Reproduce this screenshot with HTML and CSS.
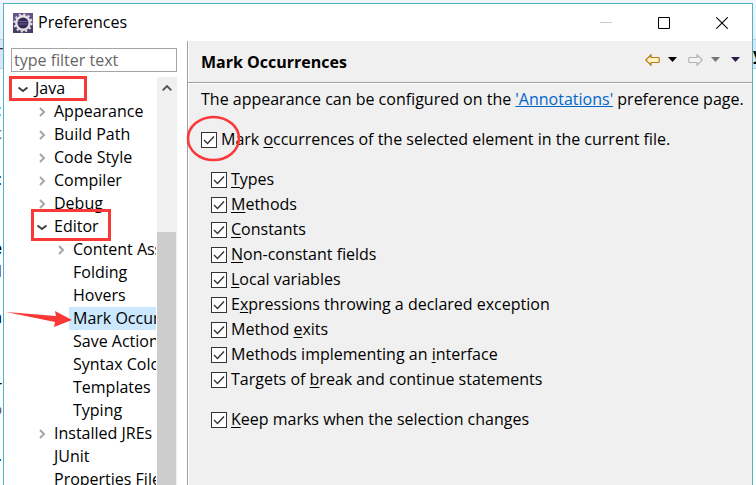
FILE: index.html
```html
<!DOCTYPE html>
<html lang="en">
<head>
<meta charset="utf-8">
<title>Preferences</title>
<link rel="stylesheet" href="styles.css">
</head>
<body>
<div class="desktop">
  <div class="backdrop" aria-hidden="true">
    <div class="strip"><span class="edge-left">T</span><span class="edge-right">y</span></div>
    <div class="code">
      <span></span><span class="teal">:</span><span class="brown">c</span><span></span><span>:</span><span></span><span></span>
      <span class="bold">e</span><span class="brown">l</span><span></span><span class="bold">n</span><span></span><span></span>
      <span>r</span><span class="brown">o</span><span></span><span>.</span>
    </div>
  </div>
  <main class="dialog">
    <header class="titlebar">
      <svg class="app-icon" viewBox="0 0 20 20" aria-hidden="true">
        <rect width="20" height="20" fill="#66548a"/>
        <rect y="10" width="20" height="10" fill="#4a3a68"/>
        <circle cx="10" cy="10" r="8.500" fill="none" stroke="#dcd9e2" stroke-width="2.200" stroke-dasharray="2.225 2.225"/>
        <circle cx="10" cy="10" r="6.700" fill="#352a55" stroke="#e4e2e6" stroke-width="2.400"/>
        <path d="M5.500 8.500h9M5.500 11h9" stroke="#6e6092"/>
      </svg>
      <h1 class="title">Preferences</h1>
      <div class="window-buttons">
        <button class="win-btn" aria-label="Minimize" disabled><svg viewBox="0 0 12 12"><path d="M0 5.500h12" stroke="#ccc"/></svg></button>
        <button class="win-btn" aria-label="Maximize"><svg viewBox="0 0 12 12"><path d="M.5.5h11v11H.5z" fill="none" stroke="#000"/></svg></button>
        <button class="win-btn" aria-label="Close"><svg viewBox="0 0 12 12"><path d="M.3.300l11.400 11.400M11.700.3L.3 11.700" stroke="#000" stroke-width="1.100"/></svg></button>
      </div>
    </header>
    <div class="content">
      <nav class="sidebar">
        <input class="filter" type="text" placeholder="type filter text" aria-label="Filter">
        <div class="tree-wrap">
          <ul class="tree">
            <li class="row"><svg class="arrow open" viewBox="0 0 12 12"><path d="M1.500 4.500L6 8l4.500-3.500"/></svg><span class="label">Java</span></li>
            <li class="row l1"><svg class="arrow" viewBox="0 0 12 12"><path d="M4 2l4 4-4 4"/></svg><span class="label">Appearance</span></li>
            <li class="row l1"><svg class="arrow" viewBox="0 0 12 12"><path d="M4 2l4 4-4 4"/></svg><span class="label">Build Path</span></li>
            <li class="row l1"><svg class="arrow" viewBox="0 0 12 12"><path d="M4 2l4 4-4 4"/></svg><span class="label">Code Style</span></li>
            <li class="row l1"><svg class="arrow" viewBox="0 0 12 12"><path d="M4 2l4 4-4 4"/></svg><span class="label">Compiler</span></li>
            <li class="row l1"><svg class="arrow" viewBox="0 0 12 12"><path d="M4 2l4 4-4 4"/></svg><span class="label">Debug</span></li>
            <li class="row l1"><svg class="arrow open" viewBox="0 0 12 12"><path d="M1.500 4.500L6 8l4.500-3.500"/></svg><span class="label">Editor</span></li>
            <li class="row l2"><svg class="arrow" viewBox="0 0 12 12"><path d="M4 2l4 4-4 4"/></svg><span class="label">Content Assist</span></li>
            <li class="row l2"><span class="arrow"></span><span class="label">Folding</span></li>
            <li class="row l2"><span class="arrow"></span><span class="label">Hovers</span></li>
            <li class="row l2"><span class="arrow"></span><span class="label selected">Mark Occurrences</span></li>
            <li class="row l2"><span class="arrow"></span><span class="label">Save Actions</span></li>
            <li class="row l2"><span class="arrow"></span><span class="label">Syntax Coloring</span></li>
            <li class="row l2"><span class="arrow"></span><span class="label">Templates</span></li>
            <li class="row l2"><span class="arrow"></span><span class="label">Typing</span></li>
            <li class="row l1"><svg class="arrow" viewBox="0 0 12 12"><path d="M4 2l4 4-4 4"/></svg><span class="label">Installed JREs</span></li>
            <li class="row l1"><span class="arrow"></span><span class="label">JUnit</span></li>
            <li class="row l1"><span class="arrow"></span><span class="label">Properties Files Editor</span></li>
          </ul>
          <div class="scrollbar">
            <button class="scroll-up" aria-label="Scroll up"><svg viewBox="0 0 10 6"><path d="M.7 5.300L5 1l4.300 4.300" fill="none" stroke="#505050" stroke-width="1.800"/></svg></button>
            <div class="thumb"></div>
          </div>
        </div>
      </nav>
      <section class="page">
        <div class="page-head">
          <h2 class="page-title">Mark Occurrences</h2>
          <div class="tools">
            <div class="tool-pair">
              <button class="tool" aria-label="Back"><svg class="nav-arrow" viewBox="0 0 15 12"><path d="M.8 6L6 .8v2.700h7.500q.7 0 .7.700v3.600q0 .7-.7.700H6v2.700z" fill="#fff3c4" stroke="#b97a1a" stroke-width="1.200"/></svg></button>
              <button class="tool" aria-label="Back history"><svg class="caret" viewBox="0 0 9 5"><path d="M0 0h9L4.500 5z" fill="#000"/></svg></button>
            </div>
            <div class="tool-pair">
              <button class="tool" aria-label="Forward" disabled><svg class="nav-arrow" viewBox="0 0 15 12"><path d="M14.200 6L9 .8v2.700H1.500q-.7 0-.7.700v3.600q0 .7.700.7H9v2.700z" fill="#f3f3f3" stroke="#b4b4b4" stroke-width="1.200"/></svg></button>
              <button class="tool" aria-label="Forward history" disabled><svg class="caret" viewBox="0 0 9 5"><path d="M0 0h9L4.500 5z" fill="#777"/></svg></button>
            </div>
            <button class="tool" aria-label="View menu"><svg class="caret" viewBox="0 0 9 5"><path d="M0 0h9L4.500 5z" fill="#2e1a47"/></svg></button>
          </div>
        </div>
        <div class="page-body">
          <p class="intro">The appearance can be configured on the <a href="#annotations">'Annotations'</a> preference page.</p>
          <label class="check main-check"><input type="checkbox" checked><span>Mark <u>o</u>ccurrences of the selected element in the current file.</span></label>
          <div class="options">
            <label class="check"><input type="checkbox" checked><span><u>T</u>ypes</span></label>
            <label class="check"><input type="checkbox" checked><span><u>M</u>ethods</span></label>
            <label class="check"><input type="checkbox" checked><span><u>C</u>onstants</span></label>
            <label class="check"><input type="checkbox" checked><span><u>N</u>on-constant fields</span></label>
            <label class="check"><input type="checkbox" checked><span><u>L</u>ocal variables</span></label>
            <label class="check"><input type="checkbox" checked><span>E<u>x</u>pressions throwing a declared exception</span></label>
            <label class="check"><input type="checkbox" checked><span>Method <u>e</u>xits</span></label>
            <label class="check"><input type="checkbox" checked><span>Methods implementing an <u>i</u>nterface</span></label>
            <label class="check"><input type="checkbox" checked><span>Targets of <u>b</u>reak and continue statements</span></label>
            <label class="check keep"><input type="checkbox" checked><span><u>K</u>eep marks when the selection changes</span></label>
          </div>
        </div>
      </section>
    </div>
  </main>
  <svg class="marks" width="260" height="340" viewBox="0 0 260 340" aria-hidden="true">
    <g fill="none" stroke="#fb3838" stroke-width="3">
      <rect x="10.500" y="77.500" width="75" height="22"/>
      <rect x="32.500" y="210.500" width="77" height="29"/>
      <ellipse cx="213.500" cy="138.500" rx="25.500" ry="21.500" stroke-width="2.500"/>
    </g>
    <path d="M6 312l50 4-1-5 17 9-18 7 1-5z" fill="#fb3838"/>
  </svg>
</div>
</body>
</html>
```
FILE: styles.css
```css
* { box-sizing: border-box; }
body {
  margin: 0;
  font: 16px/23px "Open Sans", "Noto Sans", sans-serif;
  color: #000;
  background: #fff;
}
button { padding: 0; border: 0; background: none; }
svg { display: block; }
.desktop {
  position: relative;
  display: flex;
  height: 100vh;
  padding: 3px 3px 0;
  overflow: hidden;
}
.backdrop {
  position: absolute;
  inset: 0;
  padding-top: 39px;
  background: linear-gradient(#f2f5fd, #e9edf8 39px, #fff 39px);
}
.strip {
  display: flex;
  justify-content: space-between;
  height: 30px;
  line-height: 28px;
  background: #dbe5f5;
  border: solid #c5cbd5;
  border-width: 1px 0;
}
.edge-left, .edge-right { width: 3px; display: flex; overflow: hidden; }
.edge-left { justify-content: flex-end; color: #40202c; }
.edge-right { font-weight: 700; }
.code {
  display: flex;
  flex-direction: column;
  width: 2px;
  margin-top: 7px;
  overflow: hidden;
}
.code span { display: flex; justify-content: flex-end; height: 23px; }
.code .teal { color: #3fb8b8; }
.code .brown { color: #7a4a48; }
.code .bold { font-weight: 700; }
.dialog {
  position: relative;
  flex: 1;
  display: flex;
  flex-direction: column;
  min-width: 0;
  background: #fff;
  border: 1px solid #4db6c6;
  border-bottom: 0;
}
.titlebar { display: flex; align-items: center; height: 37px; padding: 0 24px 0 9px; }
.app-icon { width: 20px; height: 20px; }
.title { flex: 1; margin: 0 0 0 5px; font-size: 16px; font-weight: 400; }
.window-buttons { display: flex; gap: 46px; }
.win-btn svg { width: 12px; height: 12px; }
.content { flex: 1; display: flex; min-height: 0; }
.sidebar { flex: none; width: 183px; display: flex; flex-direction: column; padding: 7px 10px 0 7px; }
.filter {
  width: 100%;
  height: 24px;
  padding: 0 2px;
  border: 1px solid #a3a3a8;
  font: 16px "Open Sans", "Noto Sans", sans-serif;
}
.filter::placeholder { color: #666; }
.tree-wrap { flex: 1; display: flex; min-height: 0; margin-top: 5px; }
.tree { flex: 1; min-width: 0; margin: 0 1px 0 0; padding: 0 0 0 6px; list-style: none; overflow: hidden; }
.row { display: flex; align-items: center; height: 23px; white-space: nowrap; }
.l1 { padding-left: 19px; }
.l2 { padding-left: 38px; }
.arrow { flex: none; width: 12px; height: 12px; margin-right: 2px; fill: none; stroke: #a6a6a6; stroke-width: 2; }
.arrow.open { stroke: #404040; }
.label { padding: 0 4px; }
.selected { background: #cce8ff; }
.scrollbar { flex: none; width: 20px; padding-right: 1px; background: #f0f0f0; }
.scroll-up { display: grid; place-items: center; width: 19px; height: 22px; }
.scroll-up svg { width: 10px; height: 6px; }
.thumb { height: 100%; margin-top: 133px; background: #cdcdcd; }
.page {
  flex: 1;
  min-width: 0;
  background: #f0f0f0;
  border-left: 1px solid #a0a0a0;
  box-shadow: inset 1px 0 #fff;
}
.page-head {
  display: flex;
  align-items: center;
  justify-content: space-between;
  height: 42px;
  padding: 2px 12px 0 13px;
  border-bottom: 1px solid #a0a0a0;
  box-shadow: 0 1px #fff;
}
.page-title { margin: 0; font-size: 16px; font-weight: 700; }
.tools { display: flex; align-items: center; gap: 11px; padding-bottom: 6px; }
.tool-pair { display: flex; align-items: center; gap: 8px; }
.nav-arrow { width: 15px; height: 12px; }
.caret { width: 9px; height: 5px; }
.page-body { padding: 5px 0 5px 13px; }
.intro { margin: 0; white-space: nowrap; }
a { color: #0066cc; }
.check { display: flex; align-items: center; gap: 4px; height: 25px; white-space: nowrap; }
.check input {
  flex: none;
  appearance: none;
  width: 16px;
  height: 16px;
  margin: 0;
  border: 1px solid #333;
  background: #fff url("data:image/svg+xml,%3Csvg xmlns='http://www.w3.org/2000/svg' viewBox='0 0 14 14'%3E%3Cpath d='M2 7l3.500 3.500 6.500-7' fill='none' stroke='%23333' stroke-width='1.400'/%3E%3C/svg%3E");
}
.main-check { margin-top: 16px; }
.options { margin: 15px 0 0 10px; }
.keep { margin-top: 15px; }
u { text-underline-offset: 2px; text-decoration-thickness: 1px; }
.marks { position: absolute; left: 0; top: 0; }
```
